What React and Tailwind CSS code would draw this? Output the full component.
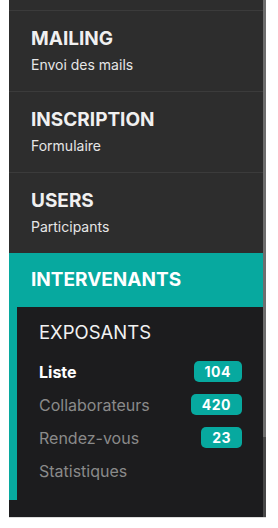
export default function App() {
  const sections = [
    { title: "MAILING", sub: "Envoi des mails" },
    { title: "INSCRIPTION", sub: "Formulaire" },
    { title: "USERS", sub: "Participants" },
  ]

  const links = [
    { label: "Liste", count: "104", active: true },
    { label: "Collaborateurs", count: "420" },
    { label: "Rendez-vous", count: "23" },
    { label: "Statistiques" },
  ]

  return (
    <div className="w-[278px] h-[528px] bg-white pl-[9px] font-['Inter',sans-serif]">
      <div className="w-[257px] flex border-b border-[#dcdcdc]">
        {/* menu */}
        <div className="w-[254px] h-[517px] flex flex-col bg-[#1c1c1e]">
          <div className="h-[11px] bg-[#2d2d2d] border-b border-[#3b3b3b]"></div>

          {sections.map((s, i) => (
            <div
              key={s.title}
              className={`bg-[#2d2d2d] pl-[22px] pt-[16px] ${i < 2 ? "h-[81px] border-b border-[#3b3b3b]" : "h-[80px]"}`}
            >
              <h2 className="text-[19px] leading-[24px] font-bold text-[#f0f0f0]">{s.title}</h2>
              <p className="mt-[5px] text-[14px] leading-[18px] text-[#e6e6e6]">{s.sub}</p>
            </div>
          ))}

          <div className="bg-[#07a99f] pl-[8px]">
            <div className="h-[54px] pl-[14px] pt-[15px]">
              <h2 className="text-[19px] leading-[24px] font-bold text-white">INTERVENANTS</h2>
            </div>

            <div className="h-[193px] bg-[#1c1c1e] pl-[22px] pr-[21px] pt-[13px]">
              <h3 className="text-[18.5px] leading-[24px] text-[#f2f2f2]">EXPOSANTS</h3>
              <div className="mt-[11px]">
                {links.map((l) => (
                  <div key={l.label} className="h-[33px] flex items-center justify-between">
                    <span className={l.active ? "text-[16px] font-bold text-white" : "text-[16px] text-[#8a8a8a]"}>
                      {l.label}
                    </span>
                    {l.count && (
                      <span className="h-[21px] px-[11px] rounded-[5px] bg-[#07a99f] text-white text-[14px] font-bold leading-[21px] tracking-[0.5px]">
                        {l.count}
                      </span>
                    )}
                  </div>
                ))}
              </div>
            </div>
          </div>
        </div>

        {/* scrollbar */}
        <div className="w-[3px] h-[517px] flex flex-col">
          <div className="h-[437px] bg-[#6e6e6e]"></div>
          <div className="flex-1 bg-[#484848]"></div>
        </div>
      </div>
    </div>
  )
}
